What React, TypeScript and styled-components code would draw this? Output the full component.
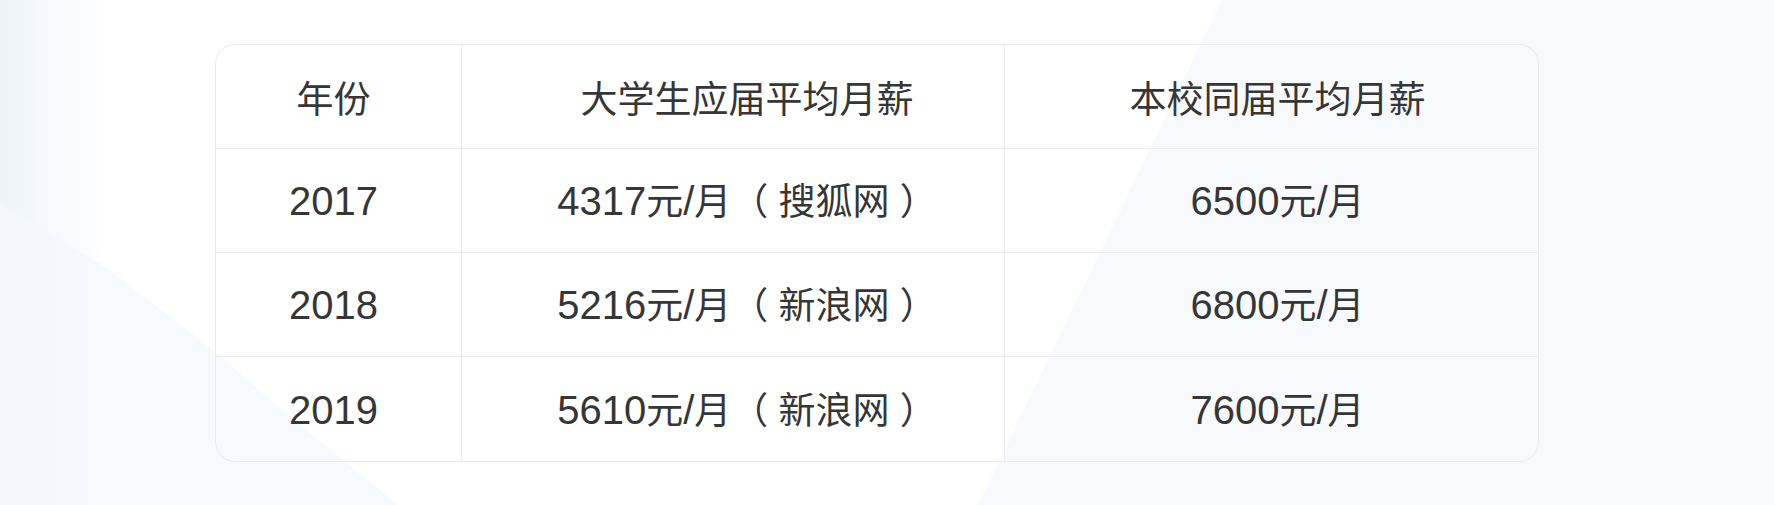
import React from "react";
import styled, { createGlobalStyle } from "styled-components";

const GlobalStyle = createGlobalStyle`
  html, body {
    margin: 0;
    padding: 0;
    background: #ffffff;
  }
`;

const Page = styled.main`
  position: relative;
  width: 1774px;
  height: 505px;
  overflow: hidden;
  background: #ffffff;
  isolation: isolate;
  padding: 44px 0 0 215px;
  box-sizing: border-box;
  font-family: "Liberation Sans", "Noto Sans CJK SC", sans-serif;

  &::before {
    content: "";
    position: absolute;
    inset: 0;
    z-index: -1;
    background: linear-gradient(
      90deg,
      rgba(237, 242, 251, 0.95) 0px,
      rgba(255, 255, 255, 0) 110px
    );
  }

  &::after {
    content: "";
    position: absolute;
    inset: 0;
    z-index: -1;
    background: #f8f9fd;
    clip-path: polygon(1222px 0, 1774px 0, 1774px 505px, 978px 505px);
  }
`;

const Corner = styled.div`
  position: absolute;
  inset: 0;
  z-index: -1;
  background: rgba(244, 247, 253, 0.8);
  clip-path: polygon(
    0 203px,
    110px 270px,
    213px 350px,
    300px 425px,
    398px 505px,
    0 505px
  );
`;

const Table = styled.table`
  width: 1322px;
  border-collapse: separate;
  border-spacing: 0;
  border: 1px solid #ebebeb;
  border-radius: 20px;
  overflow: hidden;
  table-layout: fixed;
  color: #363636;
  font-size: 37px;
  line-height: 46px;
`;

const Cell = styled.td<{ $last?: boolean; $bottom?: boolean; $shift?: number }>`
  height: 104px;
  padding: 3px 0 0 ${(p) => (p.$shift && p.$shift > 0 ? p.$shift * 2 : 0)}px;
  padding-right: ${(p) => (p.$shift && p.$shift < 0 ? -p.$shift * 2 : 0)}px;
  box-sizing: border-box;
  text-align: center;
  vertical-align: middle;
  font-weight: 400;
  border-right: ${(p) => (p.$last ? "none" : "1px solid #ebebeb")};
  border-bottom: ${(p) => (p.$bottom ? "none" : "1px solid #ebebeb")};
  white-space: nowrap;
`;

const HeadCell = styled(Cell).attrs({ as: "th" })`
  padding-top: 8px;
`;

const Num = styled.span`
  font-size: 40px;
`;

const rows = [
  { year: "2017", national: "4317", source: "搜狐网", school: "6500" },
  { year: "2018", national: "5216", source: "新浪网", school: "6800" },
  { year: "2019", national: "5610", source: "新浪网", school: "7600" },
];

const shifts = [-5, 14, 6];

export default function App() {
  return (
    <>
      <GlobalStyle />
      <Page>
        <Corner />
        <Table>
          <colgroup>
            <col style={{ width: 246 }} />
            <col style={{ width: 543 }} />
            <col style={{ width: 533 }} />
          </colgroup>
          <thead>
            <tr>
              <HeadCell $shift={shifts[0]}>年份</HeadCell>
              <HeadCell $shift={shifts[1]}>大学生应届平均月薪</HeadCell>
              <HeadCell $shift={shifts[2]} $last>
                本校同届平均月薪
              </HeadCell>
            </tr>
          </thead>
          <tbody>
            {rows.map((r, i) => {
              const bottom = i === rows.length - 1;
              return (
                <tr key={r.year}>
                  <Cell $bottom={bottom} $shift={shifts[0]}>
                    <Num>{r.year}</Num>
                  </Cell>
                  <Cell $bottom={bottom} $shift={shifts[1]}>
                    <Num>{r.national}</Num>元<Num>/</Num>月（ {r.source} ）
                  </Cell>
                  <Cell $bottom={bottom} $shift={shifts[2]} $last>
                    <Num>{r.school}</Num>元<Num>/</Num>月
                  </Cell>
                </tr>
              );
            })}
          </tbody>
        </Table>
      </Page>
    </>
  );
}
